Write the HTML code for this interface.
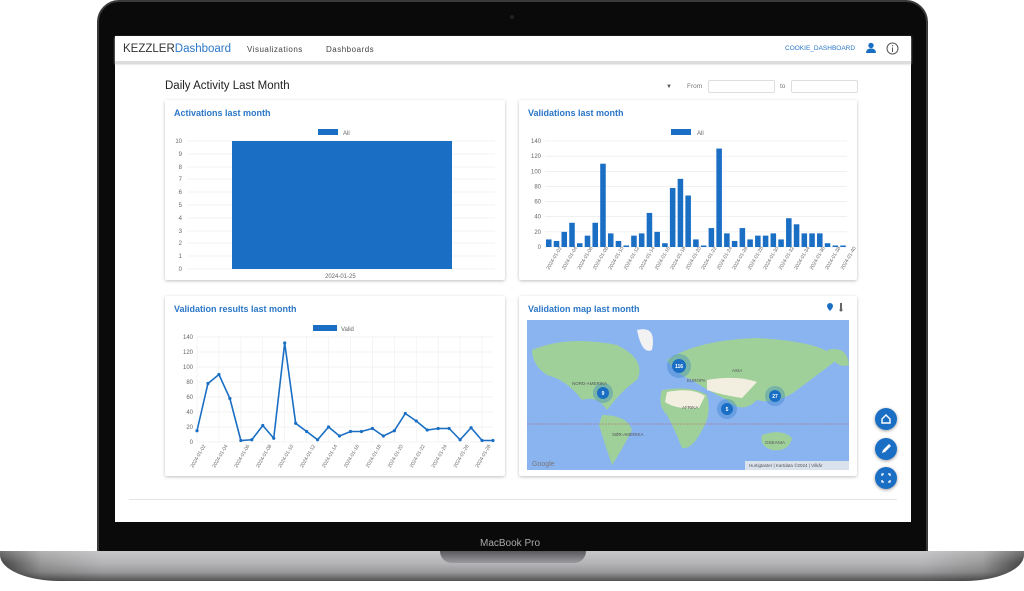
<!DOCTYPE html>
<html><head><meta charset="utf-8"><style>
*{margin:0;padding:0;box-sizing:border-box}
body{width:1024px;height:591px;background:#fff;position:relative;overflow:hidden;font-family:"Liberation Sans",sans-serif}
.lid{position:absolute;left:97px;top:0;width:831px;height:556px;background:#0a0a0a;border-radius:22px 22px 0 0;border:2px solid #3a3a3a}
.screen{position:absolute;left:115px;top:36px;width:796px;height:486px;background:#fff}
.base{position:absolute;left:0;top:551px;width:1024px;height:30px;border-radius:0 0 60px 60px/0 0 26px 26px;background:linear-gradient(90deg,#444 0,#999 4%,#b5b5b8 10%,#b5b5b8 90%,#999 96%,#444 100%)}
.base2{position:absolute;left:0;top:551px;width:1024px;height:30px;border-radius:0 0 60px 60px/0 0 26px 26px;background:linear-gradient(rgba(255,255,255,.25),rgba(255,255,255,0) 40%,rgba(0,0,0,.15) 70%,rgba(0,0,0,.55))}
.notch{position:absolute;left:440px;top:551px;width:146px;height:12px;background:linear-gradient(#5a5a5e,#9a9a9e);border-radius:0 0 12px 12px}
.mbp{position:absolute;left:480px;top:538px;font-size:10px;color:#aaa}
.hdr{position:absolute;left:0;top:0;width:796px;height:27px;border-bottom:2px solid #ddd;box-shadow:0 1px 2px #ccc}
.card{position:absolute;background:#fff;box-shadow:0 1px 3px rgba(0,0,0,.25);border-radius:2px}
.ct{position:absolute;left:9px;top:8px;font-size:9px;font-weight:bold;color:#2b77c8}
.fab{position:absolute;width:22px;height:22px;border-radius:50%;background:#1a6fc4;box-shadow:0 1px 3px rgba(0,0,0,.4)}
input{position:absolute;height:13px;border:1px solid #ddd;border-radius:2px;background:#fff}
</style></head><body>
<div class="lid"></div>
<div style="position:absolute;left:510px;top:15px;width:4px;height:4px;border-radius:50%;background:#222"></div>
<div class="screen">
 <div class="hdr">
  <div style="position:absolute;left:8px;top:7px;font-size:11.5px;color:#333">KEZZLER<span style="color:#2b77c8">Dashboard</span></div>
  <div style="position:absolute;left:132px;top:9px;font-size:8px;color:#444;letter-spacing:.5px">Visualizations</div>
  <div style="position:absolute;left:211px;top:9px;font-size:8px;color:#444;letter-spacing:.5px">Dashboards</div>
  <div style="position:absolute;left:670px;top:9px;font-size:6.5px;color:#2b77c8">COOKIE_DASHBOARD</div>
  <svg style="position:absolute;left:750px;top:6px" width="12" height="12"><circle cx="6" cy="3.5" r="2.7" fill="#1a6fc4"/><path d="M1 11 Q1 6.5 6 6.5 Q11 6.5 11 11Z" fill="#1a6fc4"/></svg>
  <svg style="position:absolute;left:771px;top:6px" width="13" height="13"><circle cx="6.5" cy="6.5" r="5.5" fill="none" stroke="#555"/><line x1="6.5" y1="5.5" x2="6.5" y2="10" stroke="#555"/><circle cx="6.5" cy="3.8" r=".7" fill="#555"/></svg>
 </div>
 <div style="position:absolute;left:50px;top:44px;font-size:11.5px;color:#222">Daily Activity Last Month</div>
 <div style="position:absolute;left:551px;top:48px;font-size:6px;color:#555">▼</div>
 <div style="position:absolute;left:572px;top:47px;font-size:6.5px;color:#777">From</div>
 <input style="left:593px;top:44px;width:67px">
 <div style="position:absolute;left:665px;top:47px;font-size:6.5px;color:#777">to</div>
 <input style="left:676px;top:44px;width:67px">
 <div style="position:absolute;left:14px;top:463px;width:768px;border-top:1px solid #e4e4e4"></div>
</div>

<div class="card" style="left:165px;top:100px;width:340px;height:180px"><div class="ct">Activations last month</div></div>
<svg style="position:absolute;left:165px;top:100px" width="340" height="180" font-family="Liberation Sans" font-size="6" fill="#666">
 <rect x="153" y="29" width="20" height="6" fill="#1a6fc4"/><text x="178" y="35">All</text>
 <g stroke="#e8e8e8" stroke-width=".6">
 <line x1="22" y1="41" x2="330" y2="41"/><line x1="22" y1="54" x2="330" y2="54"/><line x1="22" y1="67" x2="330" y2="67"/><line x1="22" y1="79" x2="330" y2="79"/><line x1="22" y1="92" x2="330" y2="92"/><line x1="22" y1="105" x2="330" y2="105"/><line x1="22" y1="118" x2="330" y2="118"/><line x1="22" y1="131" x2="330" y2="131"/><line x1="22" y1="143" x2="330" y2="143"/><line x1="22" y1="156" x2="330" y2="156"/><line x1="22" y1="169" x2="330" y2="169"/></g>
 <g text-anchor="end"><text x="17" y="43">10</text><text x="17" y="56">9</text><text x="17" y="69">8</text><text x="17" y="81">7</text><text x="17" y="94">6</text><text x="17" y="107">5</text><text x="17" y="120">4</text><text x="17" y="133">3</text><text x="17" y="145">2</text><text x="17" y="158">1</text><text x="17" y="171">0</text></g>
 <rect x="67" y="41" width="220" height="128" fill="#1a6fc4"/>
 <text x="160" y="178">2024-01-25</text>
</svg>

<div class="card" style="left:519px;top:100px;width:338px;height:180px"><div class="ct">Validations last month</div></div>
<svg id="v" style="position:absolute;left:519px;top:100px" width="338" height="180" font-family="Liberation Sans" font-size="6" fill="#666"></svg>

<div class="card" style="left:165px;top:296px;width:340px;height:180px"><div class="ct">Validation results last month</div></div>
<svg id="r" style="position:absolute;left:165px;top:296px" width="340" height="180" font-family="Liberation Sans" font-size="6" fill="#666"></svg>

<div class="card" style="left:519px;top:296px;width:338px;height:180px"><div class="ct">Validation map last month</div></div>
<svg style="position:absolute;left:826px;top:302px" width="22" height="10"><path d="M4 1a3 3 0 0 1 3 3c0 2-3 5-3 5s-3-3-3-5a3 3 0 0 1 3-3z" fill="#1a6fc4"/><rect x="14" y="1" width="2" height="6" fill="#666"/><circle cx="15" cy="8" r="1.5" fill="#666"/></svg>
<svg style="position:absolute;left:527px;top:320px" width="322" height="150" font-family="Liberation Sans" font-size="4.5" fill="#555">
 <rect width="322" height="150" fill="#8ab4f0"/>
 <g fill="#9fd09a">
 <path d="M5 30 Q40 15 90 25 Q120 40 110 60 Q95 70 80 90 Q70 75 55 80 Q40 60 20 55 Q5 45 5 30Z"/>
 <path d="M75 95 Q100 95 105 110 Q95 130 85 145 Q78 125 72 105Z"/>
 <path d="M110 10 Q130 5 125 30 Q115 35 110 10Z" fill="#f2f2f2"/>
 <path d="M140 40 Q170 20 230 18 Q300 22 310 40 Q290 55 270 70 Q250 85 230 80 Q215 95 200 80 Q180 70 165 60 Q150 55 140 40Z"/>
 <path d="M135 70 Q165 65 180 75 Q185 95 175 110 Q165 130 155 128 Q148 110 140 95 Q130 85 135 70Z"/>
 <path d="M235 115 Q255 108 265 118 Q262 132 245 130 Q232 126 235 115Z"/>
 <path d="M300 30 Q320 25 322 45 Q310 50 300 30Z"/>
 </g>
 <path d="M140 72 Q165 67 178 76 L172 88 Q150 90 138 82Z" fill="#f3efe0"/>
 <path d="M180 60 Q210 55 230 62 L215 78 Q195 75 180 70Z" fill="#f3efe0"/>
 <line x1="0" y1="104" x2="322" y2="104" stroke="#c44" stroke-width=".4" stroke-dasharray="2 1"/>
 <g fill="#1a6fc4"><circle cx="152" cy="46" r="12" opacity=".3"/><circle cx="152" cy="46" r="7"/><circle cx="76" cy="73" r="10" opacity=".3"/><circle cx="76" cy="73" r="6"/><circle cx="200" cy="89" r="10" opacity=".3"/><circle cx="200" cy="89" r="6"/><circle cx="248" cy="76" r="10" opacity=".3"/><circle cx="248" cy="76" r="6"/></g>
 <g fill="#fff" font-size="5" text-anchor="middle" font-weight="bold"><text x="152" y="48">116</text><text x="76" y="75">9</text><text x="200" y="91">5</text><text x="248" y="78">27</text></g>
 <text x="45" y="65">NORD-AMERIKA</text><text x="160" y="62">EUROPA</text><text x="155" y="89">AFRIKA</text><text x="205" y="52">ASIA</text><text x="85" y="116">SØR-AMERIKA</text><text x="238" y="124">OSEANIA</text>
 <text x="5" y="146" font-size="7" fill="#777">Google</text>
 <rect x="218" y="141" width="104" height="9" fill="#eee" opacity=".8"/><text x="222" y="147">Hurtigtaster | Kartdata ©2024 | Vilkår</text>
</svg>

<div class="fab" style="left:875px;top:408px"><svg width="22" height="22"><path d="M7 11l4-4 4 4v4H7z" fill="none" stroke="#fff" stroke-width="1.4"/></svg></div>
<div class="fab" style="left:875px;top:438px"><svg width="22" height="22"><path d="M7 15l1-3 6-6 2 2-6 6z" fill="#fff"/></svg></div>
<div class="fab" style="left:875px;top:467px"><svg width="22" height="22" fill="none" stroke="#fff" stroke-width="1.3"><path d="M7 9V7h2M13 7h2v2M15 13v2h-2M9 15H7v-2"/></svg></div>

<div class="mbp">MacBook Pro</div>
<div class="base"></div>
<div class="base2"></div>
<div class="notch"></div>
<script>
function grid(s,x0,x1,y0,y1){let g='';for(let i=0;i<=7;i++){let y=y1-(y1-y0)*i/7;g+=`<line x1="${x0}" y1="${y}" x2="${x1}" y2="${y}" stroke="#e8e8e8" stroke-width=".6"/><text x="${x0-4}" y="${y+2}" text-anchor="end">${i*20}</text>`;}return g;}
let vd=[10,8,20,32,5,15,32,110,18,8,2,15,18,45,20,5,78,90,68,10,2,25,130,18,8,25,10,15,15,18,10,38,30,18,18,18,5,2,2];
let s='<rect x="152" y="29" width="20" height="6" fill="#1a6fc4"/><text x="178" y="35">All</text>'+grid(0,26,328,41,147);
let w=(328-26)/vd.length;
vd.forEach((v,i)=>{let h=v/140*106;s+=`<rect x="${26+i*w+1}" y="${147-h}" width="${w-2.2}" height="${h}" fill="#1a6fc4"/>`;});
for(let i=0;i<20;i++){let x=26+i*w*2+4;s+=`<text transform="translate(${x},170) rotate(-60)" font-size="5">2024-01-${String(i*2+2).padStart(2,'0')}</text>`;}
document.getElementById('v').innerHTML=s;
let rd=[15,78,90,58,2,3,22,5,132,25,14,3,20,8,14,14,18,8,15,38,28,16,18,18,3,19,2,2];
let r='<rect x="148" y="29" width="24" height="6" fill="#1a6fc4"/><text x="176" y="35">Valid</text>'+grid(0,32,328,41,146);
let rw=(328-32)/(rd.length-1);let pts=rd.map((v,i)=>`${32+i*rw},${146-v/140*105}`);
for(let i=0;i<rd.length;i+=2){r+=`<line x1="${32+i*rw}" y1="41" x2="${32+i*rw}" y2="146" stroke="#eee" stroke-width=".6"/>`}
r+=`<polyline points="${pts.join(' ')}" fill="none" stroke="#1a6fc4" stroke-width="1.6"/>`;
pts.forEach(p=>{let [x,y]=p.split(',');r+=`<circle cx="${x}" cy="${y}" r="1.6" fill="#1a6fc4"/>`});
for(let i=0;i<rd.length;i+=2){r+=`<text transform="translate(${32+i*rw-4},172) rotate(-60)" font-size="5">2024-01-${String(i+2).padStart(2,'0')}</text>`;}
document.getElementById('r').innerHTML=r;
</script>
</body></html>
